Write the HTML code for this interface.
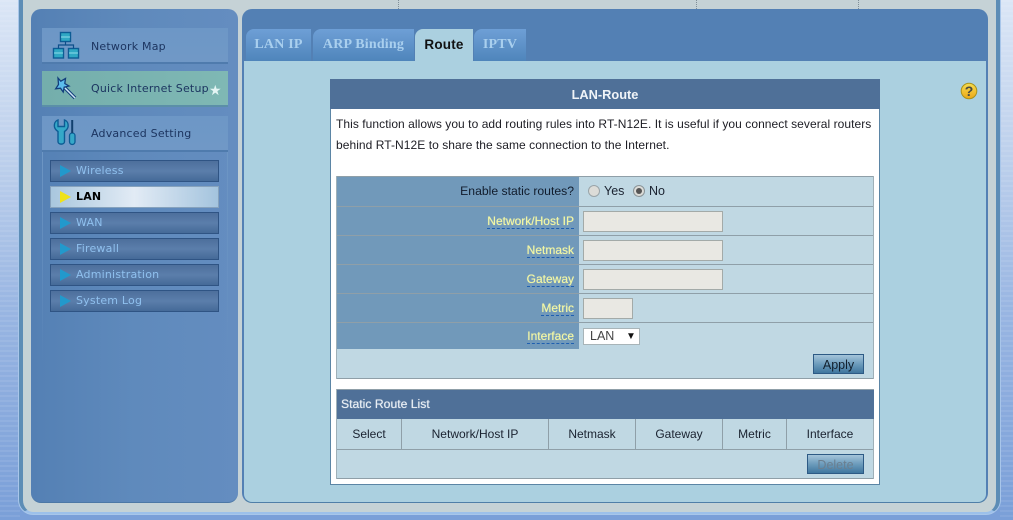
<!DOCTYPE html>
<html><head><meta charset="utf-8"><style>
html,body{margin:0;padding:0}
body{width:1013px;height:520px;position:relative;overflow:hidden;background:#7a9fd8;font-family:"Liberation Sans",sans-serif;font-size:12px;color:#1a2230}
div,span{position:absolute;white-space:nowrap;box-sizing:border-box}
.stripes{top:0;width:20px;height:520px;background:repeating-linear-gradient(180deg,rgba(255,255,255,.08) 0 2px,rgba(255,255,255,0) 2px 5px),linear-gradient(180deg,#dbe6f6 0%,#bdd0ec 30%,#98b5e2 60%,#7a9fd8 100%)}
.menu{left:42px;width:186px;height:36px;background:linear-gradient(180deg,#6d97c6,#7098c6);border-bottom:2px solid #4f7bad;font-family:"DejaVu Sans",sans-serif;font-size:11px;color:#1c3560;letter-spacing:.2px;line-height:35px;padding-left:49px}
.sub{left:50px;width:169px;height:22px;background:linear-gradient(180deg,#4d6f9c,#5b7eab 50%,#456a98);border:1px solid #2f5484;font-family:"DejaVu Sans",sans-serif;font-size:11px;color:#8fc0ee;letter-spacing:.2px;line-height:19px;padding-left:25px}
.arr{left:9px;top:4px;width:0;height:0;border-left:11px solid #2299cc;border-top:6px solid transparent;border-bottom:6px solid transparent}
.tab{top:29px;height:32px;background:linear-gradient(180deg,#6e9fd6,#4f85bb);border-radius:8px 0 0 0;font-family:"Liberation Serif",serif;font-weight:bold;font-size:14px;color:#a9cfee;text-align:center;line-height:32px;letter-spacing:.2px}
.lab{left:337px;width:242px;background:#7199ba;text-align:right;padding-right:5px;color:#f2f6a4;font-size:12px;text-shadow:0 0 .6px #f2f6a4}
.lab span{position:static;border-bottom:1px dashed #1f5fb0;padding-bottom:0}
.val{left:579px;width:294px;background:#c0d8e3}
.hl{left:337px;width:536px;height:1px;background:#8f9fa8}
.inp{left:583px;height:21px;background:#e9e8e3;border:1px solid #a3aaa8}
.th{top:419px;height:30px;line-height:30px;text-align:center;background:#c0d8e3;border-right:1px solid #8f9fa8}
.btn{text-align:center;font-size:12.5px;background:linear-gradient(180deg,#a4c4da 0%,#6d9cbc 50%,#3f769e 100%);border:1px solid #2d5a85}
.fade{top:152px;width:1px;height:210px;background:linear-gradient(180deg,#6d96c4,rgba(109,150,196,0))}
</style></head><body>
<div class="stripes" style="left:0"></div>
<div class="stripes" style="left:1000px;width:13px"></div>
<div style="left:19px;top:-20px;width:981px;height:534px;background:#c5d2d6;border:4px solid #5d8db6;border-bottom:2px solid #9cc0ea;border-radius:14px;box-shadow:0 0 0 1px #a8c6ea"></div>

<div style="left:398px;top:0;height:9px;border-left:1px dotted #7f8e98"></div>
<div style="left:696px;top:0;height:9px;border-left:1px dotted #7f8e98"></div>
<div style="left:858px;top:0;height:9px;border-left:1px dotted #7f8e98"></div>

<!-- left panel -->
<div style="left:31px;top:9px;width:207px;height:494px;border-radius:10px;background:linear-gradient(90deg,#5480b4,#5f8abc 50%,#648dc0);border-bottom:1px solid #4c78a6"></div>
<div class="fade" style="left:42px"></div>
<div class="fade" style="left:227px"></div>

<div class="menu" style="top:28px;line-height:37px">Network Map</div>
<div class="menu" style="top:71px;height:36px;background:linear-gradient(90deg,#74aeac,#7fb8b4);border-bottom-color:#5b8fa8">Quick Internet Setup</div>
<div class="menu" style="top:116px;height:36px">Advanced Setting</div>

<svg style="position:absolute;left:50px;top:28px" width="36" height="125" viewBox="0 0 36 125">
<g fill="#2fa8c4" stroke="#0d5c94" stroke-width="1.4">
<rect x="10.500" y="4.500" width="10" height="9"/><rect x="3.500" y="20.500" width="10" height="9.500"/><rect x="18.500" y="20.500" width="10" height="9.500"/>
</g>
<path d="M11 9h9M4 25h9M19 25h9" stroke="#8fdcea" stroke-width="1"/>
<path d="M15.500 13.500v3.500M8.500 20.500v-3.500h15v3.500" fill="none" stroke="#0d4f8a" stroke-width="1.2"/>
<path d="M8 50l2.800 3.200 4.700-2.700-.7 5 4.200 2.500-4.800 1.200-1 4.800-2.700-3.800-4.800.6 2.800-4.300z" fill="#5cbcec" stroke="#123e7c" stroke-width="1.300"/>
<path d="M15 60l10 10" stroke="#123e7c" stroke-width="3.500"/><path d="M15 60l10 10" stroke="#cfe6f5" stroke-width="1.500"/>
<path d="M8 92c-3 1-4 4-3.500 7 .4 2 2 3.500 3.500 4.500v10c0 3.500 6.500 3.500 6.500 0v-10c1.500-1 3.100-2.500 3.500-4.500.5-3-.5-6-3.500-7v6.500h-6.500z" fill="#35a8c8" stroke="#0d5c94" stroke-width="1.400"/>
<rect x="19.500" y="105" width="5.500" height="11.500" rx="2.700" fill="#35a8c8" stroke="#0d5c94" stroke-width="1.300"/>
<path d="M22.200 92v13" stroke="#12406e" stroke-width="2"/>
</svg>
<div style="left:209px;top:83px;color:#e4f5f4;font-size:14px;line-height:15px">★</div>

<div class="sub" style="top:160px"><div class="arr"></div>Wireless</div>
<div class="sub" style="top:186px;background:linear-gradient(90deg,#a9c7de,#e2ebf5 50%,#a4c4de);border-color:#86a2bd;color:#000;font-weight:bold"><div class="arr" style="border-left-color:#efe21a"></div>LAN</div>
<div class="sub" style="top:212px"><div class="arr"></div>WAN</div>
<div class="sub" style="top:238px"><div class="arr"></div>Firewall</div>
<div class="sub" style="top:264px"><div class="arr"></div>Administration</div>
<div class="sub" style="top:290px"><div class="arr"></div>System Log</div>

<!-- right panel -->
<div style="left:242px;top:9px;width:746px;height:494px;border-radius:10px;background:#5380b4;border:2px solid #5380b4;border-top:0;border-bottom-color:#4f7fa8"></div>
<div style="left:244px;top:61px;width:742px;height:441px;background:#abd0e0;border-radius:0 0 8px 8px"></div>

<div class="tab" style="left:246px;width:65px">LAN IP</div>
<div class="tab" style="left:313px;width:101px">ARP Binding</div>
<div class="tab" style="left:415px;width:58px;background:#abd0e0;color:#111;font-family:'Liberation Sans',sans-serif;font-size:13.500px">Route</div>
<div class="tab" style="left:474px;width:52px">IPTV</div>

<svg style="position:absolute;left:960px;top:82px" width="18" height="18" viewBox="0 0 18 18"><defs><linearGradient id="h" x1="0" y1="0" x2="0" y2="1"><stop offset="0" stop-color="#f6dc50"/><stop offset="1" stop-color="#eda818"/></linearGradient></defs><circle cx="9" cy="9" r="7.800" fill="url(#h)" stroke="#a8921c" stroke-width="1"/><text x="9" y="14" text-anchor="middle" font-family="Liberation Sans" font-weight="bold" font-size="14" fill="#4a4a40">?</text></svg>

<!-- content -->
<div style="left:330px;top:79px;width:550px;height:406px;background:#fff;border:1px solid #5b85a5;border-top:0"></div>
<div style="left:330px;top:79px;width:550px;height:30px;background:#4f7098;color:#f0f4f8;font-weight:bold;font-size:12.800px;text-align:center;line-height:31px">LAN-Route</div>
<div style="left:336px;top:114px;font-size:12px;line-height:21px;letter-spacing:.058px;color:#1d1d24">This function allows you to add routing rules into RT-N12E. It is useful if you connect several routers<br>behind RT-N12E to share the same connection to the Internet.</div>

<div class="lab" style="top:177px;height:29px;line-height:28px;color:#111c2c;font-size:12.200px;text-shadow:none;line-height:29px">Enable static routes?</div>
<div class="lab" style="top:207px;height:28px;line-height:28px"><span>Network/Host IP</span></div>
<div class="lab" style="top:236px;height:28px;line-height:28px"><span>Netmask</span></div>
<div class="lab" style="top:265px;height:28px;line-height:28px"><span>Gateway</span></div>
<div class="lab" style="top:294px;height:28px;line-height:28px"><span>Metric</span></div>
<div class="lab" style="top:323px;height:26px;line-height:26px"><span>Interface</span></div>
<div class="val" style="top:177px;height:172px"></div>
<div style="left:337px;top:349px;width:536px;height:29px;background:#c0d8e3"></div>
<div class="hl" style="top:176px"></div>
<div class="hl" style="top:206px"></div>
<div class="hl" style="top:235px"></div>
<div class="hl" style="top:264px"></div>
<div class="hl" style="top:293px"></div>
<div class="hl" style="top:322px"></div>
<div class="hl" style="top:378px"></div>
<div style="left:336px;top:176px;width:1px;height:203px;background:#9fb0b8"></div>
<div style="left:873px;top:176px;width:1px;height:203px;background:#9fb0b8"></div>

<div style="left:588px;top:185px;width:12px;height:12px;border-radius:50%;background:#dcdcd8;border:1px solid #9aa4a8"></div>
<div style="left:604px;top:184px;line-height:15px;font-size:12.500px">Yes</div>
<div style="left:633px;top:185px;width:12px;height:12px;border-radius:50%;background:#dcdcd8;border:1px solid #8a9498"></div>
<div style="left:636px;top:188px;width:6px;height:6px;border-radius:50%;background:#555"></div>
<div style="left:649px;top:184px;line-height:15px;font-size:12.500px">No</div>

<div class="inp" style="top:211px;width:140px"></div>
<div class="inp" style="top:240px;width:140px"></div>
<div class="inp" style="top:269px;width:140px"></div>
<div class="inp" style="top:298px;width:50px"></div>
<div style="left:583px;top:328px;width:57px;height:17px;background:#fff;border:1px solid #a8b4b8;line-height:15px;padding-left:6px;color:#444;font-size:12.500px">LAN<span style="left:42px;top:0;font-size:10px;color:#111">▼</span></div>

<div class="btn" style="left:813px;top:354px;width:51px;height:20px;line-height:20px;color:#12202e">Apply</div>

<div style="left:337px;top:389px;width:537px;height:30px;background:#4f7098;color:#e8eef4;font-size:12.200px;line-height:29px;padding-left:4px;border-top:1px solid #8f9fa8;text-shadow:0 0 .7px #e8eef4">Static Route List</div>
<div class="th" style="left:337px;width:65px">Select</div>
<div class="th" style="left:402px;width:147px">Network/Host IP</div>
<div class="th" style="left:549px;width:87px">Netmask</div>
<div class="th" style="left:636px;width:87px">Gateway</div>
<div class="th" style="left:723px;width:64px">Metric</div>
<div class="th" style="left:787px;width:86px;border-right:0">Interface</div>
<div style="left:337px;top:449px;width:536px;height:29px;background:#c0d8e3"></div>
<div class="hl" style="top:449px"></div>
<div class="hl" style="top:478px"></div>
<div style="left:336px;top:389px;width:1px;height:90px;background:#9fb0b8"></div>
<div style="left:873px;top:419px;width:1px;height:60px;background:#9fb0b8"></div>
<div class="btn" style="left:807px;top:454px;width:57px;height:20px;line-height:20px;color:#6a7f90">Delete</div>
</body></html>
